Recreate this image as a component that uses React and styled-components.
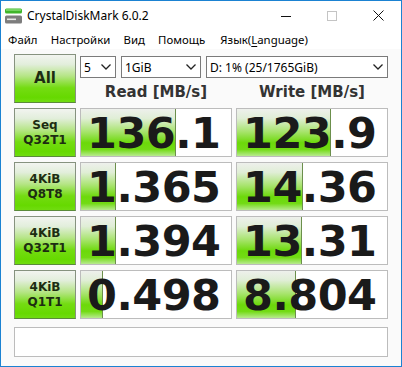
import React from 'react';
import styled, { createGlobalStyle } from 'styled-components';

const GlobalStyle = createGlobalStyle`
  html, body {
    margin: 0;
    padding: 0;
    background: #ffffff;
  }
  body {
    font-family: "Noto Sans", "DejaVu Sans", sans-serif;
  }
`;

const Window = styled.div`
  width: 402px;
  height: 367px;
  box-sizing: border-box;
  border: 1px solid #1b82d2;
  background: #ffffff;
  display: flex;
  flex-direction: column;
  overflow: hidden;
`;

const TitleBar = styled.div`
  height: 29px;
  display: flex;
  align-items: center;
  background: #ffffff;
`;

const AppIcon = styled.svg`
  margin-left: 3px;
  flex: none;
`;

const Title = styled.span`
  margin-left: 4px;
  font-size: 12px;
  color: #000000;
  flex: 1;
`;

const CtrlButton = styled.div`
  width: 46px;
  height: 29px;
  display: flex;
  align-items: center;
  justify-content: center;
`;

const MenuBar = styled.div`
  height: 19px;
  display: flex;
  align-items: center;
  padding-left: 0.5px;
  background: #ffffff;
`;

const MenuItem = styled.span`
  font-size: 11.4px;
  color: #000000;
  padding: 0 6.6px;
  margin-right: ${(p) => (p.$wide ? '2px' : '0')};
  u {
    text-decoration: underline;
    text-underline-offset: 2px;
  }
`;

const Content = styled.div`
  flex: 1;
  background: #fafafa;
  padding: 5px 0 0 13px;
`;

const Board = styled.div`
  display: grid;
  grid-template-columns: 62px 152px 152px;
  grid-template-rows: 49px repeat(4, 49px);
  column-gap: 4px;
  row-gap: 5px;
`;

const GreenButton = styled.div`
  box-sizing: border-box;
  border: 1px solid #86927f;
  border-bottom-color: #5a8a3a;
  background: linear-gradient(
    to bottom,
    #f2f4f0 0%,
    #e2eedb 20%,
    #b5e585 45%,
    #74dc12 70%,
    #66d900 90%,
    #70dc10 100%
  );
  display: flex;
  align-items: center;
  justify-content: center;
  text-align: center;
  font-family: "DejaVu Sans", sans-serif;
  font-weight: bold;
  color: #1d2c12;
  font-size: ${(p) => (p.$big ? '15px' : '12px')};
  line-height: 15px;
`;

const TopArea = styled.div`
  grid-column: 2 / 4;
  display: flex;
  flex-direction: column;
`;

const SelectRow = styled.div`
  display: flex;
  gap: 5px;
  margin-top: 2px;
`;

const SelectBox = styled.div`
  box-sizing: border-box;
  width: ${(p) => p.$w}px;
  height: 22px;
  border: 1px solid #7a7a7a;
  background: #ffffff;
  display: flex;
  align-items: center;
  justify-content: space-between;
  padding: 0 4px 0 3px;
  font-size: 12px;
  color: #000000;
`;

const Headers = styled.div`
  flex: 1;
  display: grid;
  grid-template-columns: 152px 152px;
  column-gap: 4px;
  align-items: center;
`;

const Header = styled.div`
  text-align: center;
  font-family: "DejaVu Sans", sans-serif;
  font-weight: bold;
  font-size: 15px;
  color: #333333;
  padding-top: 2px;
`;

const Cell = styled.div`
  position: relative;
  box-sizing: border-box;
  border: 1px solid #bcbcbc;
  background: #ffffff;
  overflow: hidden;
`;

const Bar = styled.div`
  position: absolute;
  left: 0;
  top: 0;
  bottom: 0;
  border-right: 1px solid #6b8f4c;
  background: linear-gradient(
    to bottom,
    #eef0ec 0%,
    #e0eed6 20%,
    #a8e46e 48%,
    #6cd90a 72%,
    #72db14 86%,
    #b8ea90 100%
  );
`;

const Value = styled.div`
  position: relative;
  padding: 2px 0 0 6px;
  font-family: "DejaVu Sans", sans-serif;
  font-weight: bold;
  font-size: 43px;
  line-height: 45px;
  color: #1a1a1a;
  letter-spacing: -0.5px;
  white-space: nowrap;
`;

const Comment = styled.div`
  box-sizing: border-box;
  width: 374px;
  height: 30px;
  margin-top: 8px;
  border: 1px solid #bcbcbc;
  background: #ffffff;
`;

const Chevron = () => (
  <svg width="10" height="6" viewBox="0 0 10 6">
    <polyline points="0.5,0.5 5,5 9.5,0.5" fill="none" stroke="#222" strokeWidth="1.3" />
  </svg>
);

const tests = [
  { l1: 'Seq', l2: 'Q32T1', read: '136.1', write: '123.9' },
  { l1: '4KiB', l2: 'Q8T8', read: '1.365', write: '14.36' },
  { l1: '4KiB', l2: 'Q32T1', read: '1.394', write: '13.31' },
  { l1: '4KiB', l2: 'Q1T1', read: '0.498', write: '8.804' },
];

const meter = (v) => {
  const f = (Math.log10(parseFloat(v)) + 1) / 5;
  return Math.max(0, Math.min(1, f)) * 100;
};

const Score = ({ value }) => (
  <Cell>
    <Bar style={{ width: `${meter(value)}%` }} />
    <Value>{value}</Value>
  </Cell>
);

const App = () => {
  return (
    <Window>
      <GlobalStyle />
      <TitleBar>
        <AppIcon width="19" height="16" viewBox="0 0 19 16">
          <rect x="1" y="0.5" width="17" height="5" rx="1.5" fill="#3fb52a" />
          <rect x="2" y="1.3" width="15" height="1.4" fill="#8ee07a" />
          <rect x="1" y="7.5" width="17" height="8" rx="1.5" fill="#7d7d7d" />
          <rect x="3" y="10.5" width="9" height="1.6" fill="#e8e8e8" />
        </AppIcon>
        <Title>CrystalDiskMark 6.0.2</Title>
        <CtrlButton>
          <svg width="10" height="10" viewBox="0 0 10 10">
            <line x1="0" y1="5.5" x2="10" y2="5.5" stroke="#111" strokeWidth="1" />
          </svg>
        </CtrlButton>
        <CtrlButton>
          <svg width="10" height="10" viewBox="0 0 10 10">
            <rect x="0.5" y="0.5" width="9" height="9" fill="none" stroke="#c4c4c4" strokeWidth="1" />
          </svg>
        </CtrlButton>
        <CtrlButton>
          <svg width="11" height="11" viewBox="0 0 11 11">
            <line x1="0.5" y1="0.5" x2="10.5" y2="10.5" stroke="#111" strokeWidth="1" />
            <line x1="10.5" y1="0.5" x2="0.5" y2="10.5" stroke="#111" strokeWidth="1" />
          </svg>
        </CtrlButton>
      </TitleBar>
      <MenuBar>
        <MenuItem>Файл</MenuItem>
        <MenuItem>Настройки</MenuItem>
        <MenuItem>Вид</MenuItem>
        <MenuItem $wide>Помощь</MenuItem>
        <MenuItem>Язык(<u>L</u>anguage)</MenuItem>
      </MenuBar>
      <Content>
        <Board>
          <GreenButton $big>All</GreenButton>
          <TopArea>
            <SelectRow>
              <SelectBox $w={36}>
                <span>5</span>
                <Chevron />
              </SelectBox>
              <SelectBox $w={80}>
                <span>1GiB</span>
                <Chevron />
              </SelectBox>
              <SelectBox $w={182}>
                <span>D: 1% (25/1765GiB)</span>
                <Chevron />
              </SelectBox>
            </SelectRow>
            <Headers>
              <Header>Read [MB/s]</Header>
              <Header>Write [MB/s]</Header>
            </Headers>
          </TopArea>
          {tests.map((t, i) => (
            <React.Fragment key={i}>
              <GreenButton>
                {t.l1}
                <br />
                {t.l2}
              </GreenButton>
              <Score value={t.read} />
              <Score value={t.write} />
            </React.Fragment>
          ))}
        </Board>
        <Comment />
      </Content>
    </Window>
  );
};

export default App;
